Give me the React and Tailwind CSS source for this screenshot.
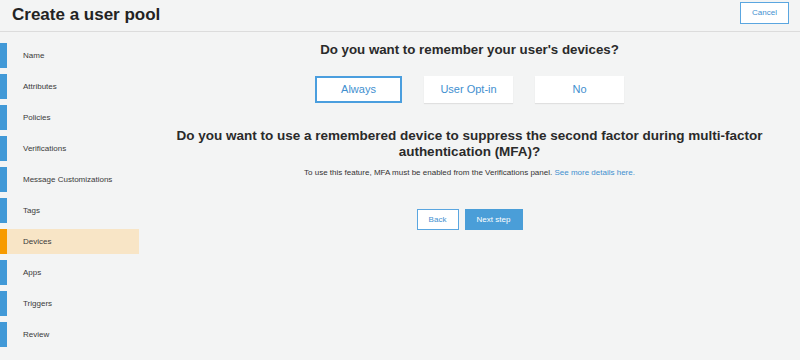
import React from 'react';

const steps = ['Name', 'Attributes', 'Policies', 'Verifications', 'Message Customizations', 'Tags', 'Devices', 'Apps', 'Triggers', 'Review'];

const App = () => {
  const active = 'Devices';

  return (
    <div className="w-[800px] h-[360px] bg-[#f3f4f4] overflow-hidden text-[#333]" style={{ fontFamily: 'Helvetica, "Liberation Sans", Arial, sans-serif' }}>
      {/* Header */}
      <div className="h-[32px] border-b border-[#dcdcdc] flex items-center justify-between pl-[12px] pr-[11px]">
        <h1 className="text-[17px] font-bold text-[#232323] leading-none -mt-[2px]">Create a user pool</h1>
        <button className="w-[49px] h-[22px] -mt-[5px] bg-white border-[1.5px] border-[#5aa6e0] text-[#3f8fcf] text-[8px]">Cancel</button>
      </div>

      <div className="flex">
        {/* Sidebar */}
        <div className="w-[139px] pt-[11px] flex flex-col gap-[6px]">
          {steps.map((step) => (
            <div
              key={step}
              className={`h-[25px] flex items-center ${step === active ? 'bg-[#f8e5c6]' : ''}`}
            >
              <div className={`w-[7px] h-full ${step === active ? 'bg-[#f79b00]' : 'bg-[#4199d7]'}`} />
              <span className="ml-[16px] text-[8px] text-[#3a3a3a]">{step}</span>
            </div>
          ))}
        </div>

        {/* Main */}
        <div className="flex-1 flex flex-col items-center">
          <h2 className="mt-[10px] text-[13.3px] font-bold text-[#2a2a2a] leading-[16px]">Do you want to remember your user's devices?</h2>
          <div className="mt-[18px] flex gap-[22px]">
            <button className="w-[87px] h-[27px] bg-white border-2 border-[#4a9ede] text-[#3f8fcf] text-[11px]">Always</button>
            <button className="w-[89px] h-[27px] bg-white shadow-[0_1px_1px_rgba(0,0,0,0.08)] text-[#3f8fcf] text-[11px]">User Opt-in</button>
            <button className="w-[89px] h-[27px] bg-white shadow-[0_1px_1px_rgba(0,0,0,0.08)] text-[#3f8fcf] text-[11px]">No</button>
          </div>
          <h2 className="mt-[25px] w-[620px] text-center text-[13.5px] font-bold text-[#2a2a2a] leading-[16px]">
            Do you want to use a remembered device to suppress the second factor during multi&#8209;factor authentication (MFA)?
          </h2>
          <p className="mt-[7px] text-[8px] text-[#333]">
            To use this feature, MFA must be enabled from the Verifications panel. <span className="text-[#3f8fcf]">See more details here.</span>
          </p>
          <div className="mt-[30px] flex gap-[6px]">
            <button className="w-[42px] h-[21px] bg-white border-[1.5px] border-[#5aa6e0] text-[#3f8fcf] text-[8px]">Back</button>
            <button className="w-[58px] h-[21px] bg-[#4a9ed8] text-white text-[8px]">Next step</button>
          </div>
        </div>
      </div>
    </div>
  );
};

export default App;
